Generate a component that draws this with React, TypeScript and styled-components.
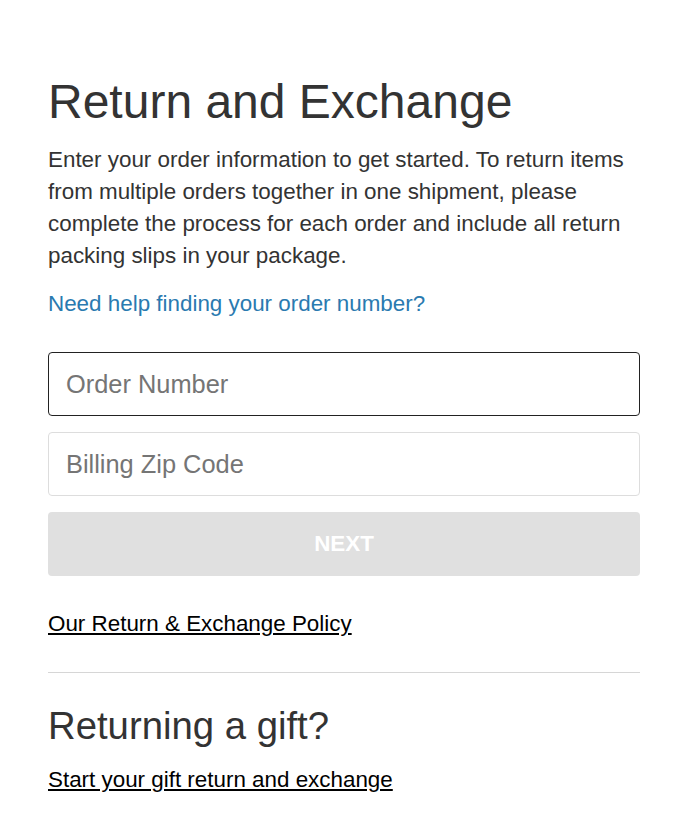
import styled, { createGlobalStyle } from "styled-components";

const GlobalStyle = createGlobalStyle`
  body {
    margin: 0;
    background: #ffffff;
    font-family: "Liberation Sans", Arial, sans-serif;
    color: #333333;
  }
`;

export default function App() {
  return (
    <>
      <GlobalStyle />
      <StyledMain>
        <StyledTitle>Return and Exchange</StyledTitle>
        <StyledIntro>
          Enter your order information to get started. To return items from
          multiple orders together in one shipment, please complete the process
          for each order and include all return packing slips in your package.
        </StyledIntro>
        <StyledHelpLink href="#">Need help finding your order number?</StyledHelpLink>

        <StyledForm onSubmit={(e) => e.preventDefault()}>
          <StyledInput $focused placeholder="Order Number" />
          <StyledInput placeholder="Billing Zip Code" />
          <StyledButton type="submit" disabled>
            NEXT
          </StyledButton>
        </StyledForm>

        <StyledPlainLink href="#">Our Return &amp; Exchange Policy</StyledPlainLink>

        <StyledDivider />

        <StyledSubtitle>Returning a gift?</StyledSubtitle>
        <StyledPlainLink $gap={16} href="#">
          Start your gift return and exchange
        </StyledPlainLink>
      </StyledMain>
    </>
  );
}

const StyledMain = styled.main`
  width: 592px;
  padding: 72px 48px 40px;
  display: flex;
  flex-direction: column;
  align-items: flex-start;
`;

const StyledTitle = styled.h1`
  margin: 0;
  font-size: 48px;
  font-weight: 400;
  line-height: 60px;
  color: #333333;
`;

const StyledIntro = styled.p`
  margin: 12px 0 0;
  font-size: 22.4px;
  line-height: 32px;
  color: #333333;
`;

const StyledHelpLink = styled.a`
  margin-top: 16px;
  font-size: 22.4px;
  line-height: 32px;
  color: #2a7ab0;
  text-decoration: none;
`;

const StyledForm = styled.form`
  width: 100%;
  margin-top: 32px;
  display: flex;
  flex-direction: column;
  gap: 16px;
`;

const StyledInput = styled.input<{ $focused?: boolean }>`
  box-sizing: border-box;
  width: 100%;
  height: 64px;
  padding: 0 17px;
  border: 1px solid ${(p) => (p.$focused ? "#222222" : "#dddddd")};
  border-radius: 4px;
  font-family: "Liberation Sans", Arial, sans-serif;
  font-size: 25.4px;
  color: #333333;
  outline: none;

  &::placeholder {
    color: #757575;
  }
`;

const StyledButton = styled.button`
  width: 100%;
  height: 64px;
  border: none;
  border-radius: 4px;
  background: #e0e0e0;
  color: #ffffff;
  font-family: "Liberation Sans", Arial, sans-serif;
  font-size: 22.4px;
  font-weight: 700;
`;

const StyledPlainLink = styled.a<{ $gap?: number }>`
  margin-top: ${(p) => p.$gap ?? 32}px;
  font-size: 22.4px;
  line-height: 32px;
  color: #000000;
  text-decoration: underline;
`;

const StyledDivider = styled.hr`
  width: 100%;
  margin: 32px 0 0;
  border: none;
  border-top: 1px solid #d6d6d6;
`;

const StyledSubtitle = styled.h2`
  margin: 31px 0 0;
  font-size: 38.3px;
  font-weight: 400;
  line-height: 44px;
  color: #333333;
`;
